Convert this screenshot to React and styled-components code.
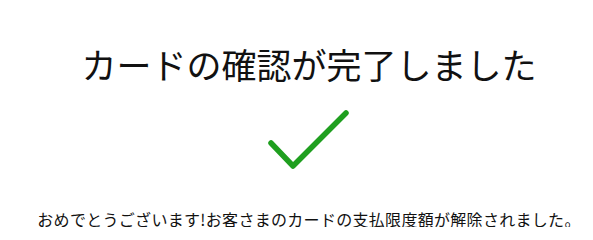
import styled, { createGlobalStyle } from "styled-components";

const GlobalStyle = createGlobalStyle`
  body {
    margin: 0;
    background: #ffffff;
    font-family: "Noto Sans CJK JP", "Noto Sans", sans-serif;
    color: #111111;
  }
`;

const Wrapper = styled.div`
  display: flex;
  flex-direction: column;
  align-items: center;
  padding-left: 25px;
`;

const Title = styled.h1`
  margin: 46px 0 0 0;
  font-size: 35px;
  font-weight: 400;
  line-height: 1;
  color: #111111;
`;

const Check = styled.svg`
  display: block;
  margin-top: 27px;
`;

const Message = styled.p`
  margin: 41px 0 0 0;
  font-size: 16px;
  line-height: 1;
  letter-spacing: 0.3px;
  color: #111111;
  white-space: nowrap;
`;

const App = () => {
  return (
    <>
      <GlobalStyle />
      <Wrapper>
        <Title>カードの確認が完了しました</Title>
        <Check width="84" height="62" viewBox="0 0 84 62">
          <polyline
            points="4,35 26,58 79,5"
            fill="none"
            stroke="#1f9f1f"
            strokeWidth="5.5"
            strokeLinecap="round"
            strokeLinejoin="round"
          />
        </Check>
        <Message>おめでとうございます!お客さまのカードの支払限度額が解除されました。</Message>
      </Wrapper>
    </>
  );
};

export default App;
